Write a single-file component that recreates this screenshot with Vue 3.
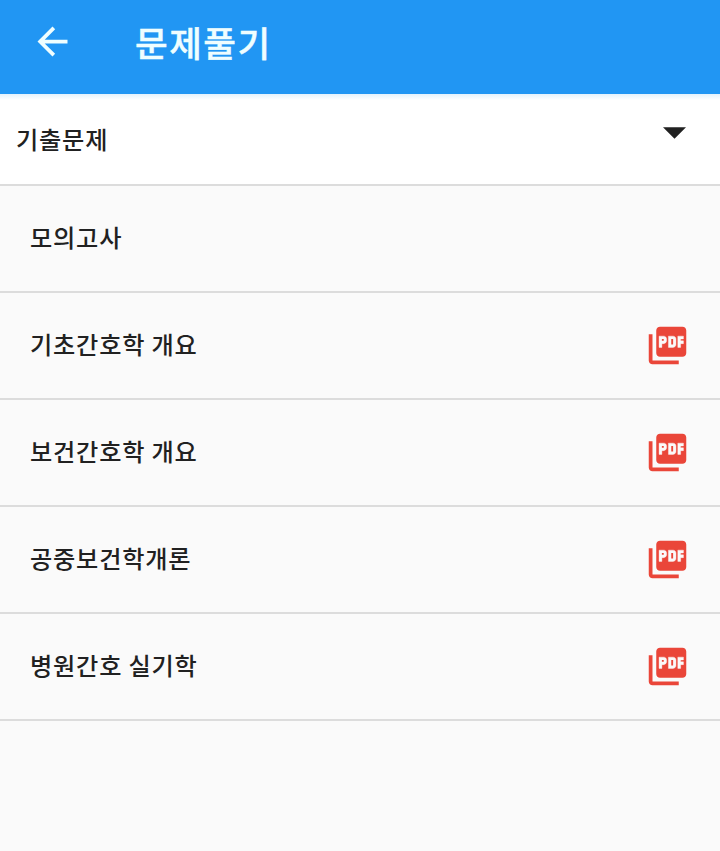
<script setup>
const items = [
  { title: '모의고사', pdf: false },
  { title: '기초간호학 개요', pdf: true },
  { title: '보건간호학 개요', pdf: true },
  { title: '공중보건학개론', pdf: true },
  { title: '병원간호 실기학', pdf: true },
]
</script>

<template>
  <div class="screen">
    <header class="bar">
      <svg class="back" viewBox="0 0 24 24" width="45" height="45">
        <path fill="#effeff" d="M20 11H7.83l5.59-5.59L12 4l-8 8 8 8 1.41-1.41L7.83 13H20v-2z" />
      </svg>
      <h1 class="title">문제풀기</h1>
    </header>
    <div class="select">
      <span class="select-label">기출문제</span>
      <svg class="caret" viewBox="0 0 24 12" width="23" height="12">
        <path fill="#212121" d="M0 0h24L12 12z" />
      </svg>
    </div>
    <ul class="list">
      <li v-for="item in items" :key="item.title" class="row">
        <span class="label">{{ item.title }}</span>
        <svg v-if="item.pdf" class="pdf" viewBox="0 0 24 24" width="45" height="45">
          <path fill="#ea4639" d="M20 2H8c-1.100 0-2 .9-2 2v12c0 1.100.9 2 2 2h12c1.100 0 2-.9 2-2V4c0-1.100-.9-2-2-2zm-8.500 7.500c0 .83-.67 1.500-1.500 1.500H9v2H7.500V7H10c.83 0 1.500.67 1.500 1.500v1zm5 2c0 .83-.67 1.500-1.500 1.500h-2.500V7H15c.83 0 1.500.67 1.500 1.500v3zm4-3H19v1h1.500V11H19v2h-1.500V7h3v1.500zM9 9.500h1v-1H9v1zM4 6H2v14c0 1.100.9 2 2 2h14v-2H4V6zm10 5.500h1v-3h-1v3z" />
          <path fill="none" stroke="#fff" stroke-width=".2" d="M7.500 7H10c.83 0 1.500.67 1.500 1.500v1c0 .83-.67 1.500-1.500 1.500H9v2H7.500zM12.500 7H15c.83 0 1.500.67 1.500 1.500v3c0 .83-.67 1.500-1.500 1.500h-2.500zM17.500 7h3v1.500H19v1h1.500V11H19v2h-1.500z" />
        </svg>
      </li>
    </ul>
  </div>
</template>

<style>
body { background: #fafafa; }
</style>

<style scoped>
.screen {
  min-height: 851px;
  background: #fafafa;
  color: #212121;
  font-family: "Noto Sans CJK KR", "Noto Sans", sans-serif;
}
.bar {
  display: flex;
  align-items: center;
  box-sizing: border-box;
  height: 94px;
  padding: 0 30px 11px;
  background: #2196f3;
}
.title {
  margin: 0 0 0 60px;
  color: #effeff;
  font-size: 35.5px;
  font-weight: 500;
  line-height: 50px;
  letter-spacing: 1.500px;
  -webkit-text-stroke: 0.400px #effeff;
}
.select {
  display: flex;
  justify-content: space-between;
  box-sizing: border-box;
  height: 92px;
  padding: 27px 34px 0 16px;
  background: linear-gradient(#e3f2fc, #fff 6px);
  border-bottom: 2px solid #dcdcdc;
}
.select-label, .label {
  font-size: 24.2px;
  font-weight: 500;
  line-height: 36px;
  letter-spacing: 0.800px;
}
.caret { margin-top: 6px; }
.list { margin: 0; padding: 0; list-style: none; }
.row {
  display: flex;
  align-items: center;
  justify-content: space-between;
  box-sizing: border-box;
  height: 107px;
  padding: 0 30px;
  border-bottom: 2px solid #dcdcdc;
}
.label { padding-bottom: 4px; }
</style>
